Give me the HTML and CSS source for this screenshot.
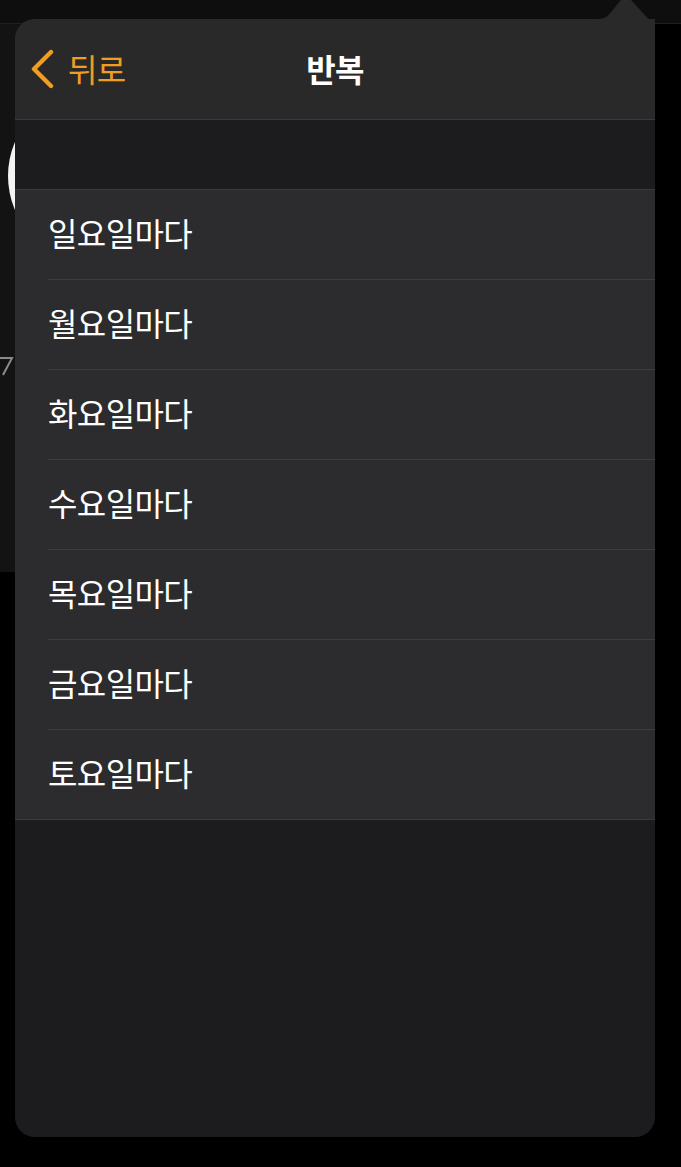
FILE: index.html
```html
<!DOCTYPE html>
<html lang="ko">
<head>
<meta charset="utf-8">
<title>반복</title>
<link rel="stylesheet" href="styles.css">
</head>
<body>
<div class="app">
  <div class="topbar"></div>
  <div class="appbody">
    <div class="ring"></div>
    <svg class="glyph" width="14" height="22" viewBox="0 0 14 22"><path d="M0 3 H12 L3 20" fill="none" stroke="#8a8a8a" stroke-width="2"/></svg>
  </div>
</div>

<div class="popover">
  <svg class="arrow" width="70" height="40" viewBox="0 0 70 40"><path d="M0 19 H8 C15 19 18 16 22 11 L30 1 Q36 -6 42 1 L62 23 Q65 27 65 33 V40 H0 Z" fill="#292929"/></svg>
  <header class="navbar">
    <div class="back">
      <svg class="chev" width="26" height="40" viewBox="0 0 26 40"><path d="M21 3 L4 20 L21 37" fill="none" stroke="#f09e23" stroke-width="4.4" stroke-linecap="round" stroke-linejoin="round"/></svg>
      <span class="back-label">뒤로</span>
    </div>
    <h1 class="title">반복</h1>
  </header>
  <div class="spacer"></div>
  <ul class="list">
    <li class="row"><span>일요일마다</span></li>
    <li class="row"><span>월요일마다</span></li>
    <li class="row"><span>화요일마다</span></li>
    <li class="row"><span>수요일마다</span></li>
    <li class="row"><span>목요일마다</span></li>
    <li class="row"><span>금요일마다</span></li>
    <li class="row"><span>토요일마다</span></li>
  </ul>
</div>
</body>
</html>
```

FILE: styles.css
```css
html, body {
  margin: 0;
  padding: 0;
}
body {
  width: 681px;
  height: 1167px;
  background: #000;
  overflow: hidden;
  position: relative;
  font-family: "Noto Sans CJK KR", "Noto Sans", sans-serif;
}
.app {
  display: flex;
  flex-direction: column;
}
.topbar {
  height: 23px;
  background: #0e0e0e;
  border-bottom: 1px solid #1f1f1f;
}
.appbody {
  width: 600px;
  height: 548px;
  background: #131313;
  position: relative;
  overflow: hidden;
}
.ring {
  position: absolute;
  left: 8px;
  top: 66px;
  width: 172px;
  height: 172px;
  border-radius: 50%;
  background: #f4f4f4;
}
.glyph {
  position: absolute;
  left: 0;
  top: 331px;
}
.popover {
  position: absolute;
  left: 15px;
  top: 19px;
  width: 640px;
  height: 1118px;
  background: #1c1c1e;
  border-radius: 20px 0 20px 20px;
}
.arrow {
  position: absolute;
  left: 575px;
  top: -19px;
}
.navbar {
  position: relative;
  height: 100px;
  background: #292929;
  border-bottom: 1px solid #3a3a3c;
  border-radius: 20px 0 0 0;
  display: flex;
  align-items: center;
  justify-content: center;
}
.back {
  position: absolute;
  left: 15px;
  top: 0;
  bottom: 0;
  display: flex;
  align-items: center;
  gap: 12px;
  color: #f09e23;
}
.chev {
  display: block;
  margin-top: 0;
}
.back-label {
  font-size: 32px;
  letter-spacing: -0.6px;
  line-height: 1;
  margin-top: -3px;
}
.title {
  margin: -3px 0 0 0;
  color: #fff;
  font-size: 32px;
  font-weight: 700;
  letter-spacing: -0.6px;
  line-height: 1;
}
.spacer {
  height: 69px;
  background: #1c1c1e;
  border-bottom: 1px solid #3a3a3c;
}
.list {
  list-style: none;
  margin: 0;
  padding: 0;
  background: #2c2c2e;
  border-bottom: 1px solid #3a3a3c;
}
.row {
  margin-left: 33px;
  height: 89px;
  border-bottom: 1px solid #3d3d40;
  display: flex;
  align-items: center;
  color: #fff;
  font-size: 32px;
  letter-spacing: -0.6px;
}
.row:last-child {
  border-bottom: none;
  height: 89px;
}
.row span {
  margin-top: -6px;
}
```
